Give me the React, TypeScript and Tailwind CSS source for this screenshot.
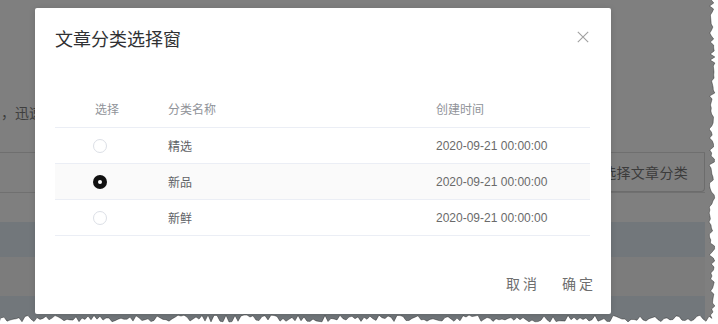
import React from 'react';

const cjk = { fontFamily: '"Noto Sans CJK SC", "Liberation Sans", sans-serif' };
const latin = { fontFamily: '"Liberation Sans", "Noto Sans CJK SC", sans-serif' };

interface Row {
  name: string;
  created: string;
  selected?: boolean;
}

const rows: Row[] = [
  { name: '精选', created: '2020-09-21 00:00:00' },
  { name: '新品', created: '2020-09-21 00:00:00', selected: true },
  { name: '新鲜', created: '2020-09-21 00:00:00' },
];

// pseudo random for the torn paper edge
function rnd(i: number) {
  const x = Math.sin(i * 12.9898 + 4.1) * 43758.5453;
  return x - Math.floor(x);
}

function TornEdge() {
  const pts: string[] = [];
  for (let y = 0; y <= 316; y += 3) {
    pts.push(`${(709 + rnd(y) * 6).toFixed(1)},${y}`);
  }
  for (let x = 712; x >= 0; x -= 3) {
    pts.push(`${x},${(315 + rnd(x + 900) * 7).toFixed(1)}`);
  }
  const inner = `M0 0L${pts.join('L')}L0 ${(315 + rnd(900) * 7).toFixed(1)}Z`;
  return (
    <svg className="absolute inset-0 pointer-events-none" width={718} height={324} viewBox="0 0 718 324">
      <path d={`M0 0H718V324H0Z ${inner}`} fill="#ffffff" fillRule="evenodd" />
      <polyline points={pts.join(' ')} fill="none" stroke="rgba(0,0,0,0.35)" strokeWidth={1} />
    </svg>
  );
}

function Radio({ checked }: { checked?: boolean }) {
  if (checked) {
    return (
      <span className="w-[14px] h-[14px] rounded-full bg-[#111] flex items-center justify-center">
        <span className="w-[4px] h-[4px] rounded-full bg-white" />
      </span>
    );
  }
  return <span className="w-[14px] h-[14px] rounded-full border border-[#dcdfe6] bg-white" />;
}

function Page() {
  return (
    <div className="w-full h-full bg-[#7f7f7f] flex flex-col pr-[13px]" style={cjk}>
      <div className="h-[153px] flex items-end pb-[30px] border-b border-[#6f6f6f]">
        <span className="text-[14px] leading-[20px] text-[#3e3e3e] pl-[1px]">，迅速</span>
      </div>
      <div className="h-[40px] flex items-stretch justify-end border-b border-[#707070]">
        <div className="flex items-center pl-[16px] pr-[16px] border border-[#6c6c6c] border-t-0 rounded-b-[4px] text-[14px] text-[#3b3b3b] tracking-[0.3px]">
          选择文章分类
        </div>
      </div>
      <div className="h-[29px]" />
      <div className="h-[35px] bg-[#72777b]" />
      <div className="h-[39px] bg-[#7c7c7c]" />
      <div className="flex-1 bg-[#72777b]" />
    </div>
  );
}

function Modal() {
  return (
    <div className="absolute left-[35px] top-[8px] w-[576px] h-[306px] bg-white rounded-[2px] shadow-[0_1px_6px_rgba(0,0,0,0.15)] flex flex-col" style={cjk}>
      <div className="h-[64px] flex items-center justify-between pl-[20px] pr-[22px]">
        <h3 className="text-[18px] leading-[24px] text-[#303133] -mt-[4px]">文章分类选择窗</h3>
        <svg width={12} height={12} viewBox="0 0 12 12" className="-mt-[6px]">
          <path d="M0.8 0.8L11.2 11.2M11.2 0.8L0.8 11.2" stroke="#a0a0a0" strokeWidth={1.1} />
        </svg>
      </div>

      <div className="pt-[19px] pl-[20px] pr-[21px]">
        <div className="grid grid-cols-[113px_268px_1fr] h-[37px] items-center border-b border-[#ebeef5] text-[12px] text-[#909399]">
          <span className="pl-[40px]">选择</span>
          <span>分类名称</span>
          <span>创建时间</span>
        </div>
        {rows.map((r) => (
          <div
            key={r.name}
            className={`grid grid-cols-[113px_268px_1fr] h-[36px] items-center border-b border-[#ebeef5] text-[12px] text-[#606266] ${r.selected ? 'bg-[#fafafa]' : ''}`}
          >
            <span className="pl-[38px] flex">
              <Radio checked={r.selected} />
            </span>
            <span>{r.name}</span>
            <span style={latin} className="text-[#6a6a6a]">{r.created}</span>
          </div>
        ))}
      </div>

      <div className="mt-auto flex justify-end items-center gap-[22px] pr-[15px] pb-[21px] text-[14px] leading-[20px] tracking-[3px] text-[#6e6e6e]">
        <span>取消</span>
        <span>确定</span>
      </div>
    </div>
  );
}

export default function App() {
  return (
    <div className="relative w-[718px] h-[324px] bg-white overflow-hidden">
      <Page />
      <Modal />
      <TornEdge />
    </div>
  );
}
